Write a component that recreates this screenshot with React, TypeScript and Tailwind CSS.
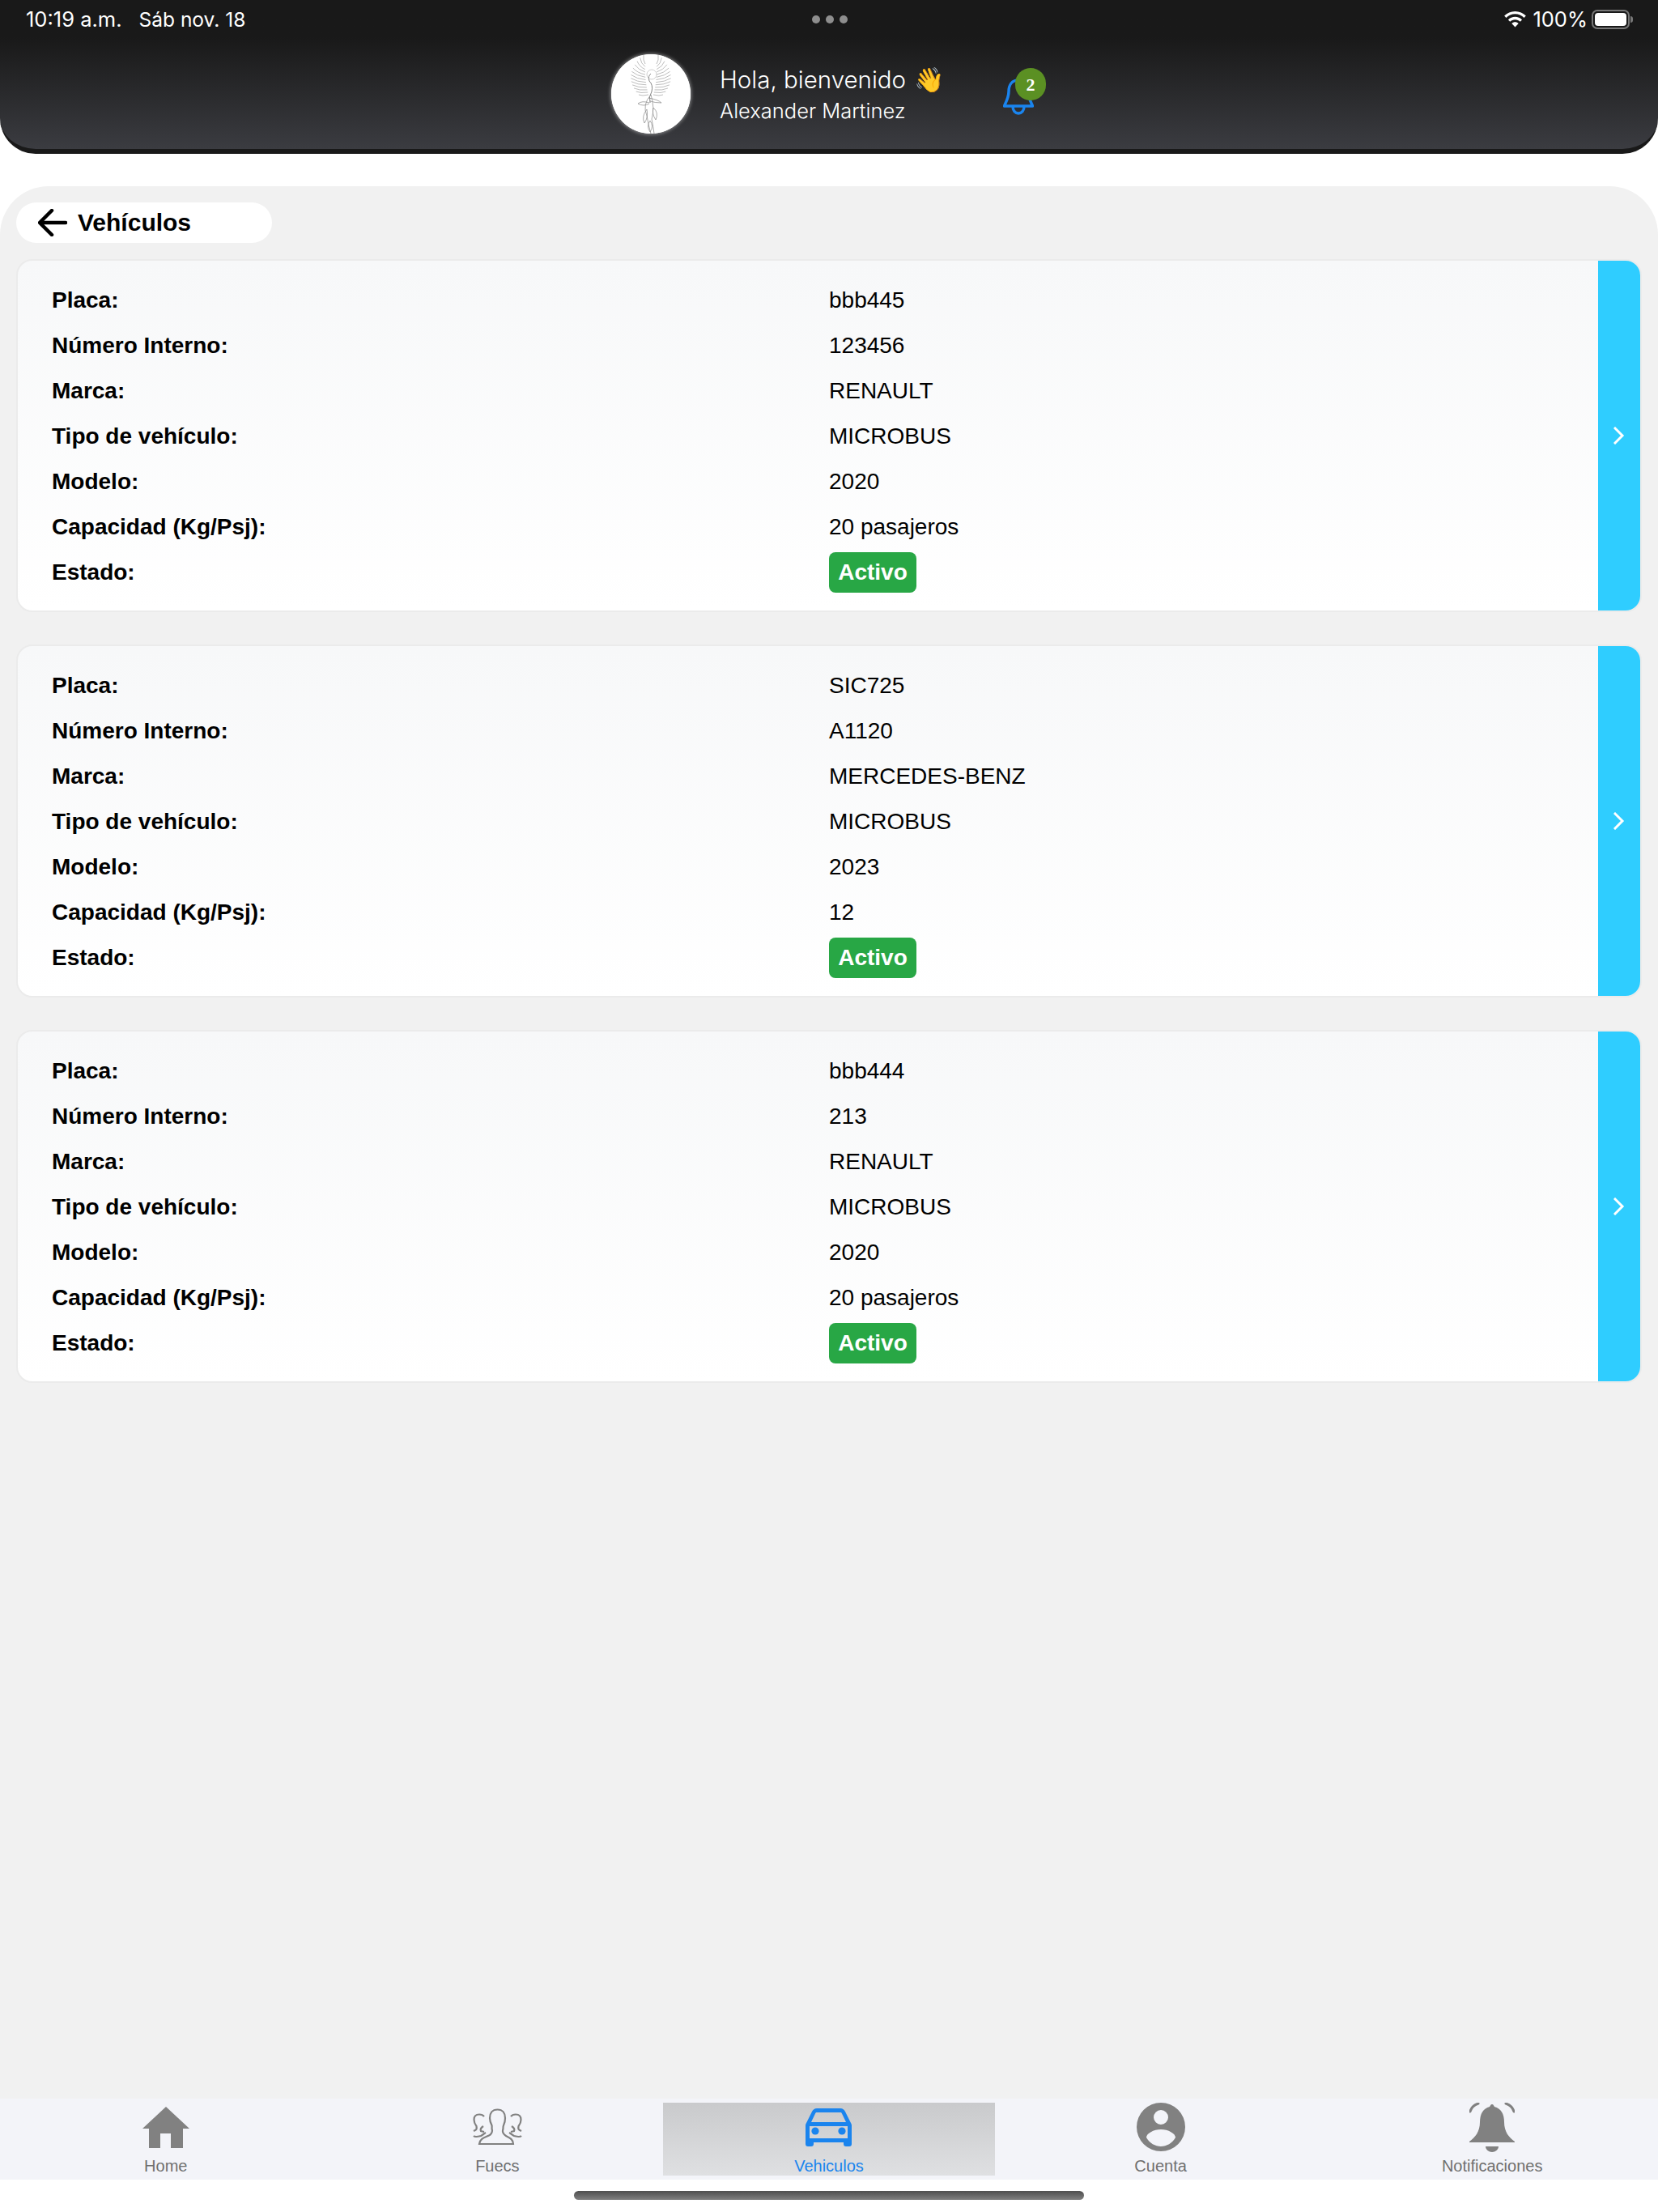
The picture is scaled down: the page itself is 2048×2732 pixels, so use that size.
const vehicles = [
  { placa: "bbb445", interno: "123456", marca: "RENAULT", tipo: "MICROBUS", modelo: "2020", capacidad: "20 pasajeros" },
  { placa: "SIC725", interno: "A1120", marca: "MERCEDES-BENZ", tipo: "MICROBUS", modelo: "2023", capacidad: "12" },
  { placa: "bbb444", interno: "213", marca: "RENAULT", tipo: "MICROBUS", modelo: "2020", capacidad: "20 pasajeros" },
];

function bez(t: number, a: number, b: number, c: number) {
  return (1 - t) * (1 - t) * a + 2 * t * (1 - t) * b + t * t * c;
}

function Phoenix() {
  const wing = Array.from({ length: 13 }, (_, i) => i / 12);
  return (
    <svg viewBox="0 0 98 98" className="h-[98px] w-[98px]" fill="none" stroke="#a0a0a0" strokeWidth="0.7">
      <circle cx="49" cy="49" r="49" fill="#fff" stroke="none" />
      {[-1, 1].map((side) =>
        wing.map((t) => {
          const tx = 49 + side * bez(t, 15, 37, 9);
          const ty = bez(t, 50, 26, 0);
          const rx = 49 + side * bez(t, 3, 8, 7);
          const ry = bez(t, 50, 32, 12);
          const mx = (tx + rx) / 2 + side * 2;
          const my = (ty + ry) / 2 + 2;
          return <path key={`${side}-${t}`} d={`M${rx} ${ry} Q${mx} ${my} ${tx} ${ty}`} />;
        })
      )}
      <path d="M49 24 Q45 27 47 33 Q52 38 50 46 Q46 52 48 60" stroke="#777" strokeWidth="0.9" />
      <circle cx="50" cy="25" r="6" strokeWidth="0.5" />
      <path d="M49 50 Q38 62 44 76 Q46 88 49 98" stroke="#888" />
      <path d="M49 50 Q54 66 50 80 Q52 90 53 98" stroke="#888" />
      <path d="M47 60 Q38 57 33 61 Q40 65 47 61" stroke="#888" />
      <path d="M46 54 Q58 56 62 60 Q54 60 48 58" stroke="#888" />
      <path d="M44 68 Q37 77 41 85 Q46 78 44 68" stroke="#888" />
      <path d="M52 66 Q59 72 55 81 Q50 74 52 66" stroke="#888" />
      <path d="M48 82 Q43 89 48 96 Q53 89 48 82" stroke="#888" />
    </svg>
  );
}

function Vehicle({ v }: { v: (typeof vehicles)[number] }) {
  const rows = [
    ["Placa:", v.placa],
    ["Número Interno:", v.interno],
    ["Marca:", v.marca],
    ["Tipo de vehículo:", v.tipo],
    ["Modelo:", v.modelo],
    ["Capacidad (Kg/Psj):", v.capacidad],
  ];
  return (
    <div className="flex h-[436px] overflow-hidden rounded-[20px] border-2 border-[#ebebeb] bg-gradient-to-b from-[#f7f8f9] to-white">
      <div className="flex-1 pl-[42px] pt-[21px]">
        {rows.map(([k, val]) => (
          <div key={k} className="flex h-[56px] items-center text-[28px] text-black">
            <div className="w-[960px] font-bold">{k}</div>
            <div>{val}</div>
          </div>
        ))}
        <div className="flex h-[56px] items-center text-[28px] text-black">
          <div className="w-[960px] font-bold">Estado:</div>
          <div className="flex h-[50px] w-[108px] items-center justify-center rounded-[8px] bg-[#28a745] text-[28px] font-bold text-white">
            Activo
          </div>
        </div>
      </div>
      <div className="flex w-[52px] items-center justify-center bg-[#2fcdff]">
        <svg width="14" height="22" viewBox="0 0 14 22" fill="none" stroke="#fff" strokeWidth="3" strokeLinecap="square">
          <path d="M2 2 L11 11 L2 20" />
        </svg>
      </div>
    </div>
  );
}

function HomeIcon() {
  return (
    <svg width="58" height="51" viewBox="0 0 58 51" fill="#818181">
      <path d="M29 0 L58 27 H50 V51 H35 V33 H22 V51 H8 V27 H0 Z" />
    </svg>
  );
}

function FuecsIcon() {
  return (
    <svg width="61" height="46" viewBox="0 0 61 46" fill="none" stroke="#818181" strokeWidth="2.2">
      <path d="M14 10 C12.5 8 10 7.5 8 7.5 C4 7.5 1.5 10 1.5 14 C1.5 18 3 20 4.5 22 C5 24 5 26 3 27 L1 28 M1 34 C3 36 6 35 10 34 C12 33 14 31 16 30 M13 22 C10 24 9 26 10 28 L14 29" />
      <path d="M47 10 C48.5 8 51 7.5 53 7.5 C57 7.5 59.5 10 59.5 14 C59.5 18 58 20 56.5 22 C56 24 56 26 58 27 L60 28 M60 34 C58 36 55 35 51 34 C49 33 47 31 45 30 M48 22 C51 24 52 26 51 28 L47 29" />
      <path d="M30.5 1.5 C24 1.5 21 6 21 12 C21 16 22 18 23.5 21 C24 23 23 25 24 27 C24 30 23 32 20 33.5 C15 36 9 37 8 44 H50 C50 38 45 36 41 34 C38 32 36.5 30 37 27 C38 25 37 23 38 21 C39.5 18 40 16 40 12 C40 6 37 1.5 30.5 1.5 Z" />
    </svg>
  );
}

function CarIcon() {
  return (
    <svg width="57" height="47" viewBox="0 0 57 47" fill="none">
      <path
        d="M14 0 H43 C46 0 48 2 49 4 L56 18 C56.6 19 57 20 57 21 V44 C57 46 56 47 54 47 H50 C48 47 47 46 47 44 V42 H10 V44 C10 46 9 47 7 47 H3 C1 47 0 46 0 44 V21 C0 20 .4 19 1 18 L8 4 C9 2 11 0 14 0 Z M14 5 C13 5 12.6 5.5 12 6.4 L7 17 H50 L45 6.4 C44.4 5.5 44 5 43 5 Z M5 22 V37 H52 V22 Z"
        fill="#1a84ee"
        fillRule="evenodd"
      />
      <circle cx="12" cy="28" r="4.6" fill="#1a84ee" />
      <circle cx="45" cy="28" r="4.6" fill="#1a84ee" />
    </svg>
  );
}

function AccountIcon() {
  return (
    <svg width="60" height="60" viewBox="0 0 60 60">
      <path
        fillRule="evenodd"
        fill="#818181"
        d="M30 0 A30 30 0 1 1 30 60 A30 30 0 1 1 30 0 Z M30 9 A9 9 0 1 0 30 27 A9 9 0 1 0 30 9 Z M30 33 C21 33 12 38 12 43 C16 50 23 54 30 54 C37 54 44 50 48 43 C48 38 39 33 30 33 Z"
      />
    </svg>
  );
}

function AlarmBellIcon() {
  return (
    <svg width="56" height="61" viewBox="0 0 56 61" fill="none">
      <path d="M28 2 C30 2 30 4 31 5 C39 7 43 14 43 24 C43 36 49 43 56 48 V49 H0 V48 C7 43 13 36 13 24 C13 14 17 7 25 5 C26 4 26 2 28 2 Z" fill="#818181" />
      <path d="M20 54 H36 C36 58 32 61 28 61 C24 61 20 58 20 54 Z" fill="#818181" />
      <path d="M1 11 C2 7 5 3 11 1" stroke="#818181" strokeWidth="3" strokeLinecap="round" />
      <path d="M55 11 C54 7 51 3 45 1" stroke="#818181" strokeWidth="3" strokeLinecap="round" />
    </svg>
  );
}

function Tab({ label, active, children }: { label: string; active?: boolean; children: React.ReactNode }) {
  return (
    <div
      className={
        active
          ? "flex flex-1 flex-col items-center bg-gradient-to-b from-[#c9cacc] to-[#dfe0e2] text-[#1a84ee]"
          : "flex flex-1 flex-col items-center text-[#6f6f6f]"
      }
    >
      <div className="flex h-[60px] items-center justify-center">{children}</div>
      <div className="mt-[6px] text-[20px] leading-[24px]">{label}</div>
    </div>
  );
}

export default function App() {
  return (
    <div className="flex h-[2732px] w-[2048px] flex-col bg-white font-['Liberation_Sans',sans-serif]">
      <header className="h-[190px] rounded-b-[44px] border-b-[6px] border-[#191919] bg-gradient-to-b from-[#191919] from-[25%] to-[#3b3c41] text-white">
        <div className="flex h-[48px] items-center justify-between pl-[32px] pr-[31px] font-['Inter',sans-serif]">
          <div className="flex w-[400px] items-center gap-[21px] pt-[1px]">
            <span className="text-[25.5px]">10:19 a.m.</span>
            <span className="text-[24.5px]">Sáb nov. 18</span>
          </div>
          <div className="flex gap-[7px]">
            <span className="h-[10px] w-[10px] rounded-full bg-[#8e8e8e]" />
            <span className="h-[10px] w-[10px] rounded-full bg-[#8e8e8e]" />
            <span className="h-[10px] w-[10px] rounded-full bg-[#8e8e8e]" />
          </div>
          <div className="flex w-[400px] items-center justify-end">
            <svg width="27" height="20" viewBox="0 0 28 21" fill="#fff">
              <path d="M14 0 C19.5 0 24.4 2.2 28 5.8 L25.6 8.3 C22.6 5.3 18.5 3.5 14 3.5 C9.5 3.5 5.4 5.3 2.4 8.3 L0 5.8 C3.6 2.2 8.5 0 14 0 Z" />
              <path d="M14 7.2 C17.5 7.2 20.7 8.6 23 11 L20.6 13.4 C18.9 11.7 16.6 10.7 14 10.7 C11.4 10.7 9.1 11.7 7.4 13.4 L5 11 C7.3 8.6 10.5 7.2 14 7.2 Z" />
              <path d="M14 14 C15.7 14 17.2 14.7 18.4 15.8 L14 20.5 L9.6 15.8 C10.8 14.7 12.3 14 14 14 Z" />
            </svg>
            <span className="ml-[8px] text-[25.5px]">100%</span>
            <div className="ml-[5px] flex items-center gap-[1px]">
              <div className="flex h-[24px] w-[47px] items-center justify-center rounded-[7px] border-2 border-[#777]">
                <div className="h-[16px] w-[39px] rounded-[4px] bg-white" />
              </div>
              <div className="h-[8px] w-[3px] rounded-r bg-[#777]" />
            </div>
          </div>
        </div>
        <div className="flex justify-center">
          <div className="flex h-[136px] w-[538px] pb-[10px] pt-[4px]">
            <div className="mt-[15px] h-[98px] w-[98px] rounded-full bg-white shadow-[0_0_4px_1px_rgba(255,255,255,0.45)]">
              <Phoenix />
            </div>
            <div className="ml-[36px] w-[281px] pt-[23px] font-['Inter',sans-serif] font-light">
              <div className="flex h-[46px] items-center gap-[10px] whitespace-nowrap text-[29.5px]">
                <span>Hola, bienvenido</span>
                <span className="font-['Noto_Color_Emoji','Noto_Sans',sans-serif] text-[30px] text-[#f5b93c]">👋</span>
              </div>
              <div className="whitespace-nowrap text-[25.5px] leading-[31px]">Alexander Martinez</div>
            </div>
            <div className="relative ml-[69px] mt-[39px] h-[52px] w-[38px]">
              <svg width="38" height="52" viewBox="0 0 38 52" fill="none" stroke="#1a84ee" strokeWidth="3.5" strokeLinejoin="round">
                <path d="M19 8 C11 8 7 14 7 22 C7 30 3 36 1.5 40 H36.5 C35 36 31 30 31 22 C31 14 27 8 19 8 Z" />
                <path d="M12 40 C12 46 15 49 19 49 C23 49 26 46 26 40" />
              </svg>
              <div className="absolute left-[15px] top-[-7px] flex h-[40px] w-[38px] items-center justify-center rounded-full bg-[#5b9023] font-['Liberation_Serif',serif] text-[22px] font-bold text-white">
                2
              </div>
            </div>
          </div>
        </div>
      </header>

      <main className="mt-[40px] flex flex-1 flex-col rounded-t-[60px] bg-[#f1f1f1] px-[20px] pt-[20px]">
        <div className="flex h-[50px] w-[316px] items-center rounded-[25px] bg-white pb-[2px] pl-[27px]">
          <svg width="36" height="34" viewBox="0 0 36 34" fill="none" stroke="#000" strokeWidth="4.5" strokeLinecap="round" strokeLinejoin="round" className="mt-[2px]">
            <path d="M34 17 H3 M17 2 L2 17 L17 32" />
          </svg>
          <span className="ml-[13px] text-[30px] font-bold text-black">Vehículos</span>
        </div>
        <div className="mt-[20px] flex flex-col gap-[40px]">
          {vehicles.map((v) => (
            <Vehicle key={v.placa} v={v} />
          ))}
        </div>
      </main>

      <nav className="flex h-[100px] bg-[#f3f4f9] py-[5px]">
        <Tab label="Home"><HomeIcon /></Tab>
        <Tab label="Fuecs"><FuecsIcon /></Tab>
        <Tab label="Vehiculos" active><CarIcon /></Tab>
        <Tab label="Cuenta"><AccountIcon /></Tab>
        <Tab label="Notificaciones"><AlarmBellIcon /></Tab>
      </nav>
      <div className="flex h-[40px] justify-center pt-[14px]">
        <div className="h-[11px] w-[630px] rounded-full bg-gradient-to-b from-[#4e4e4e] to-[#808080]" />
      </div>
    </div>
  );
}
